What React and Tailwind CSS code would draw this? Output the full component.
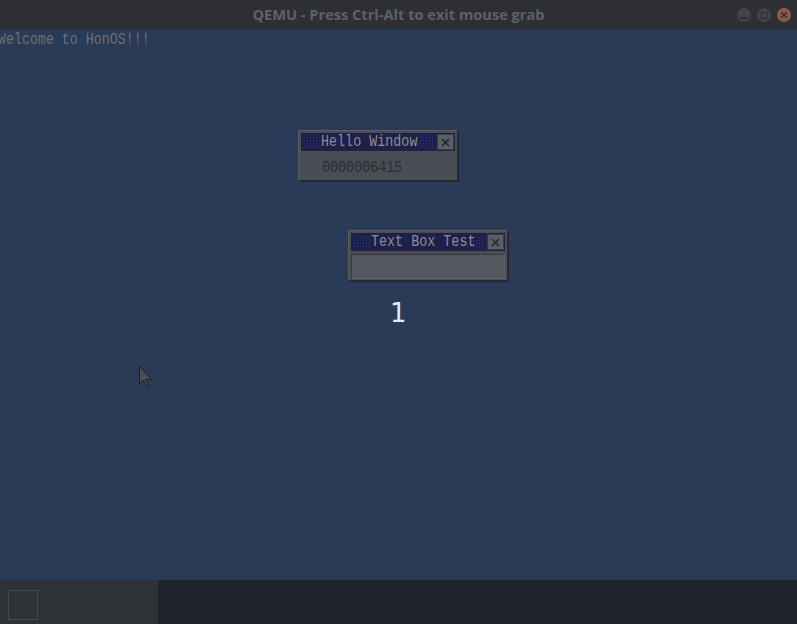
import React from 'react';

function TitleBar({ title }) {
  return (
    <div className="relative h-[18px] bg-[#1f2049] flex items-center">
      <div className="absolute left-[2px] top-[3px] w-[18px] h-[12px] bg-[radial-gradient(#2a3494_1px,transparent_1px)] bg-[size:3px_3px]" />
      <div className="absolute right-[20px] top-[3px] w-[16px] h-[12px] bg-[radial-gradient(#2a3494_1px,transparent_1px)] bg-[size:3px_3px]" />
      <span className="relative pl-[20px] text-[13.4px] leading-none text-[#8b8e95] [font-family:'Liberation_Mono',monospace] scale-y-[1.2] origin-left">
        {title}
      </span>
      <div className="absolute right-[1px] top-[1px] w-[17px] h-[16px] bg-[#5b5e64] border border-[#3a3c42] flex items-center justify-center">
        <svg width="11" height="11" viewBox="0 0 11 11">
          <path d="M2 2 L9 9 M9 2 L2 9" stroke="#24262b" strokeWidth="1.6" />
        </svg>
      </div>
    </div>
  );
}

function Win({ left, top, title, children }) {
  return (
    <div
      className="absolute w-[160px] h-[51px] bg-[#4a4d54] border border-[#5a5d64] border-r-[#2a2c32] border-b-[#2a2c32] shadow-[1px_1px_0_#24262b] p-[2px]"
      style={{ left, top }}
    >
      <TitleBar title={title} />
      {children}
    </div>
  );
}

export default function App() {
  return (
    <div className="w-[797px] h-[624px] flex flex-col overflow-hidden">
      {/* qemu title bar */}
      <div className="relative h-[30px] bg-[#2d2f34] flex items-center justify-center">
        <span className="text-[14.6px] font-bold text-[#5e6166] [font-family:'Open_Sans',sans-serif]">
          QEMU - Press Ctrl-Alt to exit mouse grab
        </span>
        <div className="absolute right-[6px] top-[8px] flex gap-[6px]">
          <div className="w-[14px] h-[14px] rounded-full bg-[#404348] flex items-end justify-center pb-[3px]">
            <div className="w-[8px] h-[2px] bg-[#2d2f34]" />
          </div>
          <div className="w-[14px] h-[14px] rounded-full bg-[#404348] flex items-center justify-center">
            <div className="w-[7px] h-[7px] border border-[#2d2f34]" />
          </div>
          <div className="w-[14px] h-[14px] rounded-full bg-[#8e5a45] flex items-center justify-center">
            <svg width="8" height="8" viewBox="0 0 8 8">
              <path d="M1 1 L7 7 M7 1 L1 7" stroke="#3a2a3a" strokeWidth="1.4" />
            </svg>
          </div>
        </div>
      </div>

      {/* desktop */}
      <div className="relative flex-1 bg-[#293b56] overflow-hidden">
        <div className="absolute left-[-2px] top-[1px] text-[13.3px] leading-[16px] text-[#6c7078] [font-family:'Liberation_Mono',monospace] scale-y-[1.2] origin-top-left">
          Welcome to HonOS!!!
        </div>

        <Win left={298} top={100} title="Hello Window">
          <div className="pl-[21px] pt-[9px] text-[13.4px] leading-none text-[#2a2d33] [font-family:'Liberation_Mono',monospace] scale-y-[1.2] origin-left">
            0000006415
          </div>
        </Win>

        <Win left={348} top={200} title="Text Box Test">
          <div className="mt-[3px] h-[25px] bg-[#54575e] border border-[#383a40] border-r-[#5e6168] border-b-[#5e6168]" />
        </Win>

        <div className="absolute left-[390px] top-[270px] text-[26px] leading-none text-[#e0ecfb] [font-family:'DejaVu_Sans',sans-serif]">
          1
        </div>

        <svg className="absolute left-[139px] top-[336px]" width="16" height="26" viewBox="0 0 16 26">
          <path d="M0.5 0.5 L0.5 18 L4.5 14 L8 22 L10 21 L6.8 13.5 L12.5 13.5 Z" fill="#4b4e55" stroke="#1d1f24" strokeWidth="1" />
        </svg>
      </div>

      {/* taskbar */}
      <div className="h-[44px] flex">
        <div className="w-[158px] bg-[#2f3237] pl-[8px] pt-[10px]">
          <div className="w-[30px] h-[30px] border border-[#46494e]" />
        </div>
        <div className="flex-1 bg-[#20242b]" />
      </div>
    </div>
  );
}
